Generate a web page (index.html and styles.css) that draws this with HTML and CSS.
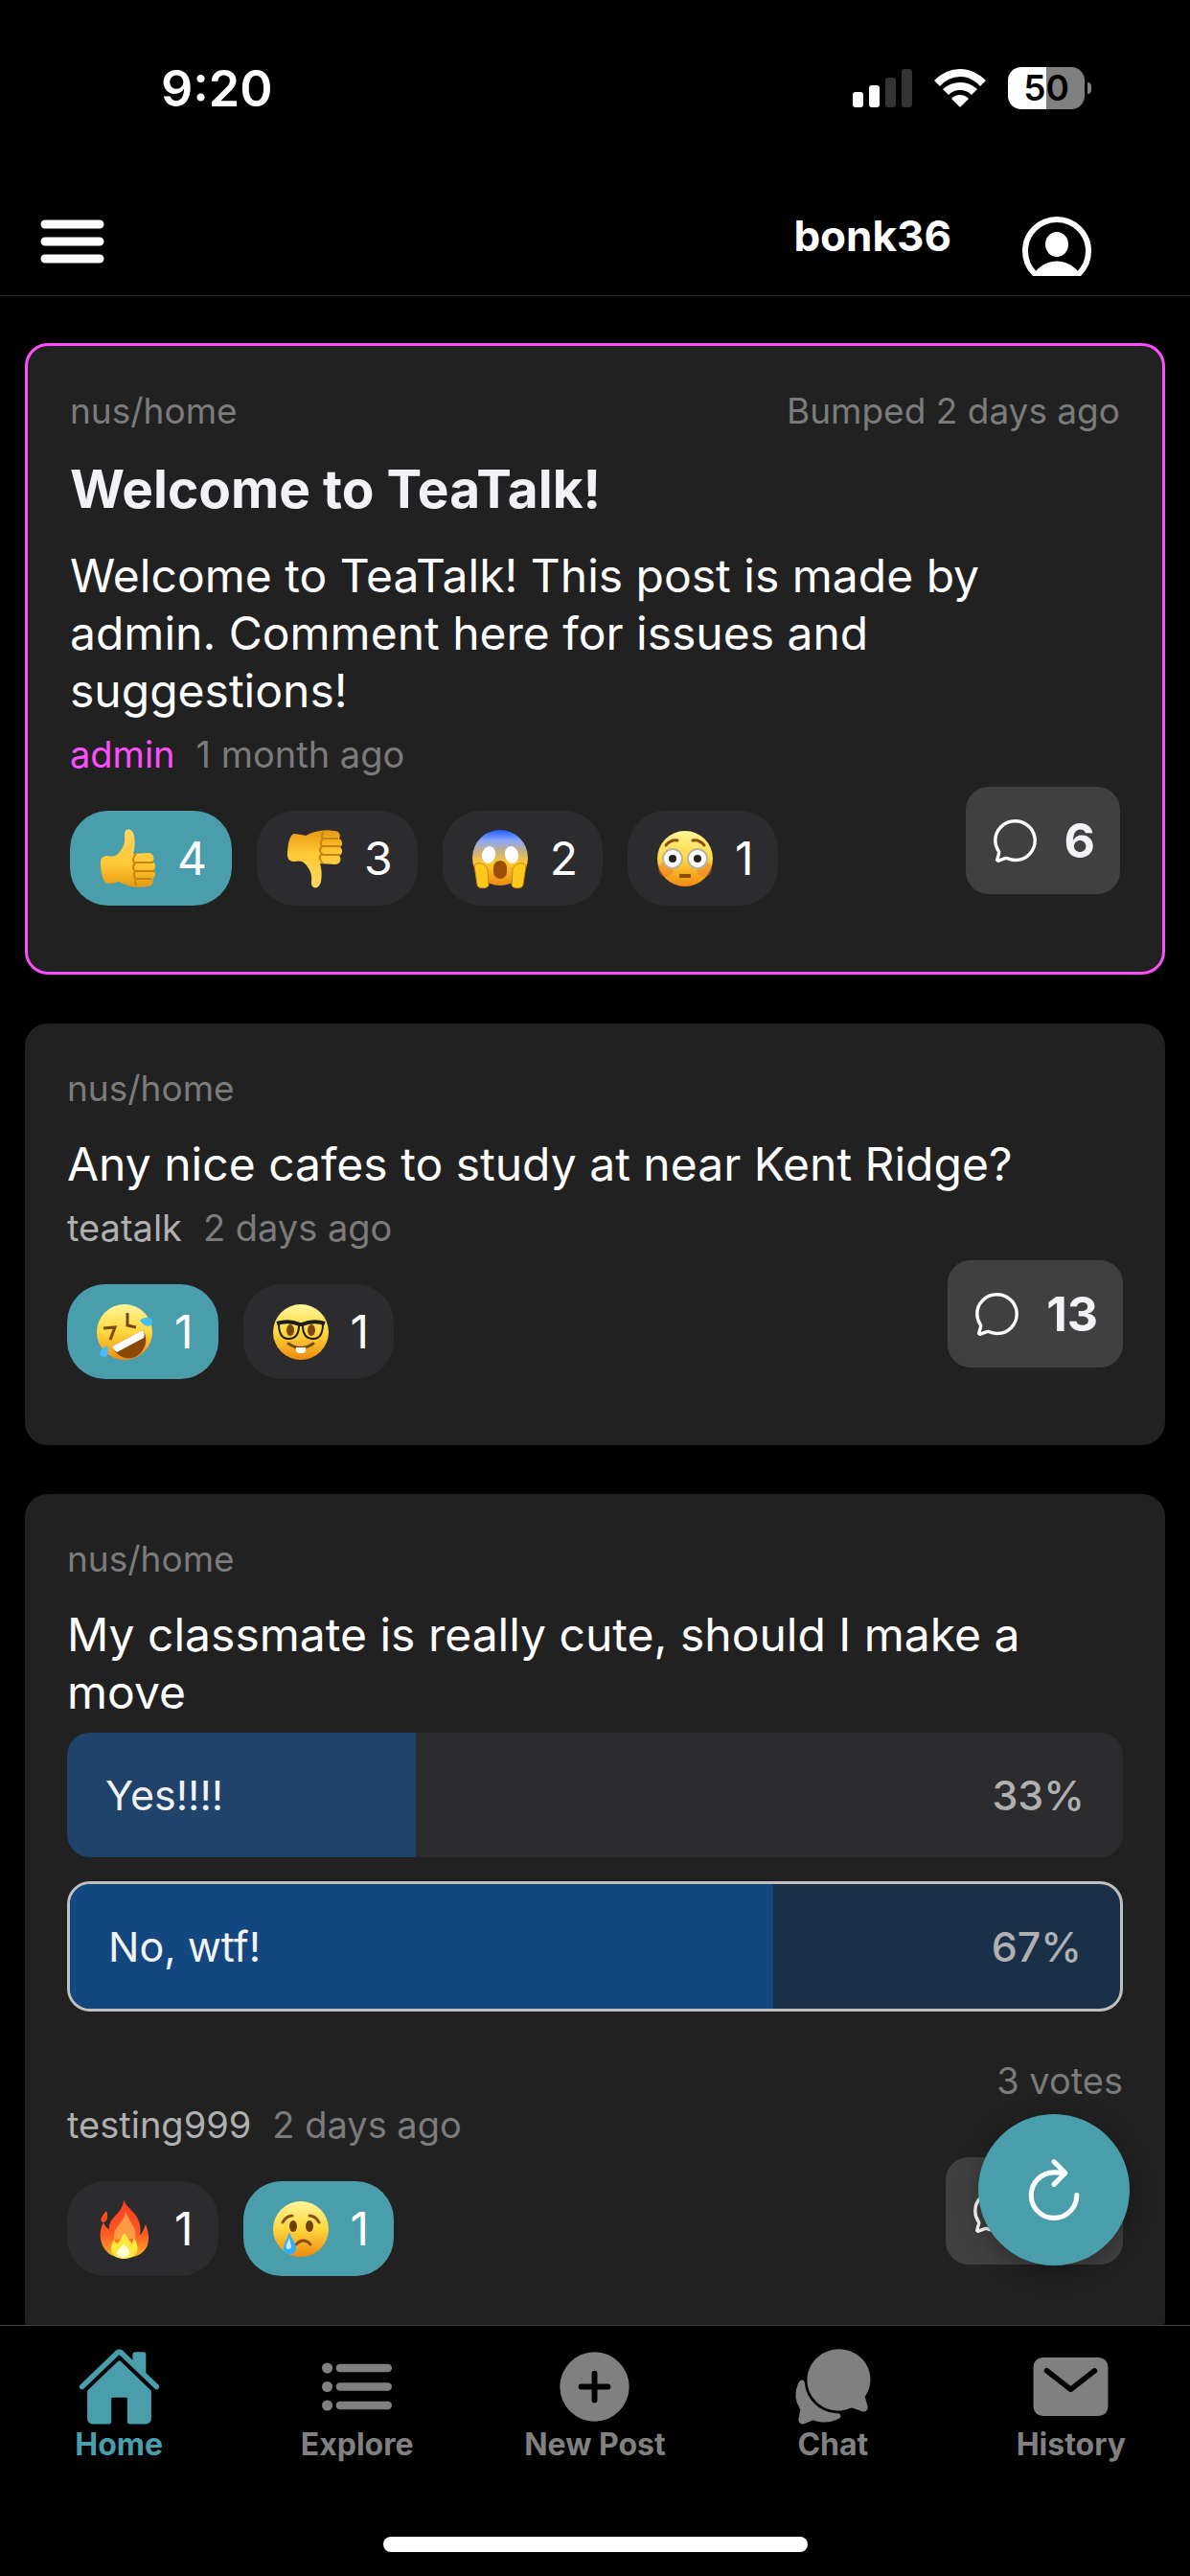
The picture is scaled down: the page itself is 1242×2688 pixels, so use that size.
FILE: index.html
```html
<!DOCTYPE html>
<html lang="en">
  <head>
    <meta charset="UTF-8" />
    <meta name="viewport" content="width=device-width, initial-scale=1.0" />
    <title>TeaTalk</title>
    <link rel="stylesheet" href="styles.css">
  </head>
  <body>
    <!-- Shared icons and emoji -->
    <svg class="sprites" width="0" height="0" aria-hidden="true">
      <defs>
        <linearGradient id="face" x1="0" y1="0" x2="0" y2="1">
          <stop offset="0" stop-color="#fff59a" />
          <stop offset="0.5" stop-color="#ffd83c" />
          <stop offset="1" stop-color="#ee8a10" />
        </linearGradient>
        <linearGradient id="scared" x1="0" y1="0" x2="0" y2="1">
          <stop offset="0" stop-color="#1f5cff" />
          <stop offset="0.2" stop-color="#8fa9f5" />
          <stop offset="0.4" stop-color="#c9b27c" />
          <stop offset="0.6" stop-color="#ffc832" />
          <stop offset="1" stop-color="#ee8a10" />
        </linearGradient>
        <linearGradient id="hand" x1="0" y1="0" x2="0" y2="1">
          <stop offset="0" stop-color="#ffd563" />
          <stop offset="0.6" stop-color="#ffc935" />
          <stop offset="1" stop-color="#e59a12" />
        </linearGradient>
        <linearGradient id="flame" x1="0" y1="0" x2="0" y2="1">
          <stop offset="0" stop-color="#ff3b1e" />
          <stop offset="0.6" stop-color="#ff5a22" />
          <stop offset="1" stop-color="#ffb52c" />
        </linearGradient>
        <symbol id="bubble" viewBox="0 0 512 512">
          <path d="M87.49 380c1.19-4.38-1.44-10.47-3.95-14.86a44.86 44.86 0 00-2.54-3.8 199.81 199.81 0 01-33-110C47.65 139.09 140.73 48 255.83 48 356.21 48 440 117.54 459.58 209.85a199 199 0 014.42 41.64c0 112.41-89.49 204.93-204.59 204.93-18.3 0-43-4.6-56.47-8.37s-26.92-8.77-30.39-10.11a31.09 31.09 0 00-11.12-2.07 30.71 30.71 0 00-12.09 2.43l-67.83 24.48a16 16 0 01-4.67 1.22 9.6 9.6 0 01-9.57-9.74 15.85 15.85 0 01.6-3.29z" fill="none" stroke="#fff" stroke-width="34" stroke-linecap="round" stroke-miterlimit="10" />
        </symbol>
        <symbol id="thumb" viewBox="0 0 64 64">
          <path d="M4 36c0-5 3-7 7-7 5 1 9 1 12-3 4-5 7-9 6-18-1-8 8-9 10 0 1 6 1 12-1 19l16-1c5 0 7 6 4 9 4 2 4 7 1 9 3 2 3 7-1 9 2 4 0 8-5 8-10 2-21 0-30-5-4 1-8 2-12 2-5-1-7-13-7-22z" fill="url(#hand)" />
          <path d="M39 36h20M40 45h20M40 53h17M41 27c-4 4-4 8-1 10-3 3-2 6 0 8-2 3-1 6 1 8-2 2-1 5 1 7" fill="none" stroke="#c98312" stroke-width="2" />
        </symbol>
        <symbol id="scream" viewBox="0 0 64 64">
          <circle cx="32" cy="31" r="29" fill="url(#scared)" />
          <ellipse cx="20" cy="28" rx="7" ry="9" transform="rotate(14 20 28)" fill="#fff" />
          <ellipse cx="44" cy="28" rx="7" ry="9" transform="rotate(-14 44 28)" fill="#fff" />
          <rect x="25" y="34" width="14" height="19" rx="7" fill="#9c5006" />
          <path d="M5 39c4-4 11-3 14 4l1 16c0 5-12 5-12 0z" fill="#ffc91c" stroke="#c98312" />
          <path d="M59 39c-4-4-11-3-14 4l-1 16c0 5 12 5 12 0z" fill="#ffc91c" stroke="#c98312" />
        </symbol>
        <symbol id="flushed" viewBox="0 0 64 64">
          <circle cx="32" cy="32" r="29" fill="url(#face)" />
          <circle cx="12" cy="43" r="8" fill="#f26a22" opacity="0.4" />
          <circle cx="52" cy="43" r="8" fill="#f26a22" opacity="0.4" />
          <path d="M12 18q5-6 12-5M52 18q-5-6-12-5" fill="none" stroke="#8a4d0a" stroke-width="3" stroke-linecap="round" />
          <circle cx="19" cy="32" r="10" fill="#fff" stroke="#b9b3a2" stroke-width="2" />
          <circle cx="45" cy="32" r="10" fill="#fff" stroke="#b9b3a2" stroke-width="2" />
          <circle cx="19" cy="32" r="4" fill="#222" />
          <circle cx="45" cy="32" r="4" fill="#222" />
          <rect x="26" y="48" width="12" height="4" rx="1" fill="#8a4d0a" />
        </symbol>
        <symbol id="rofl" viewBox="0 0 64 64">
          <circle cx="32" cy="32" r="29" fill="url(#face)" />
          <path d="M35 12v13l9 2M10 28l12-1-5 13" fill="none" stroke="#7a470a" stroke-width="3" />
          <path d="M19 47L51 30c7 10 2 23-8 28-9 4-20-1-24-11z" fill="#8a4806" />
          <path d="M19 47L51 30c2 3 2 6 1 8L24 53c-3-2-4-4-5-6z" fill="#fff" />
          <path d="M48 20c4-5 13-4 13 1 1 6-8 7-13-1zM14 46c2 6 1 13-4 12-7-1-3-9 4-12z" fill="#48bdf5" />
        </symbol>
        <symbol id="nerd" viewBox="0 0 64 64">
          <circle cx="32" cy="32" r="29" fill="url(#face)" />
          <ellipse cx="21" cy="30" rx="4" ry="6" fill="#7a470a" />
          <ellipse cx="43" cy="30" rx="4" ry="6" fill="#7a470a" />
          <path d="M7 23q12-4 24 1h2q12-5 24-1" fill="none" stroke="#1d1d1d" stroke-width="4" />
          <path d="M9 23c0 11 3 16 10 16s11-5 11-14M55 23c0 11-3 16-10 16s-11-5-11-14" fill="none" stroke="#1d1d1d" stroke-width="2" />
          <path d="M19 44q13 9 26 0" fill="none" stroke="#7a470a" stroke-width="3" stroke-linecap="round" />
          <path d="M27 48h10v4q-1 2-4 2h-2q-3 0-4-2z" fill="#fff" />
        </symbol>
        <symbol id="fire" viewBox="0 0 64 64">
          <path d="M31 1c2 7 8 10 13 17 5 8 5 14 4 20 3-2 4-6 6-11 5 12 4 23-3 29-9 8-29 8-37 0-9-9-9-22-4-31 2 4 3 6 6 7-1-13 15-16 15-31z" fill="url(#flame)" />
          <path d="M13 13c3 6 0 13-4 12-4-3 0-7 4-12z" fill="#ff4a20" />
          <path d="M33 13c-1 13-13 15-12 30l22-1c3-11-6-16-10-29z" fill="#ff9a45" />
          <path d="M32 36c4 5 5 9 8 11 1-2 1-4 2-6 9 16-1 22-11 22-11 0-17-9-10-20 1 2 2 4 4 4 3-3 3-7 7-11z" fill="#ffe93b" />
          <path d="M31 47c3 4 7 6 6 11-2 5-11 5-13 0-1-5 5-7 7-11z" fill="#fffbd0" />
        </symbol>
        <symbol id="cry" viewBox="0 0 64 64">
          <circle cx="32" cy="32" r="29" fill="url(#face)" />
          <path d="M13 25q4-7 10-7M51 25q-4-7-10-7M27 48q8-8 15 0" fill="none" stroke="#8a4d0a" stroke-width="3" stroke-linecap="round" />
          <ellipse cx="24" cy="29" rx="4" ry="6" fill="#6f3f08" />
          <ellipse cx="41" cy="29" rx="4" ry="6" fill="#6f3f08" />
          <path d="M20 35c2 7 7 12 7 17 0 8-13 8-13 0 0-5 4-10 6-17z" fill="#2fb0ff" />
          <path d="M20 41c-2 5-4 8-3 11 1 2 5 1 5-2z" fill="#c6ecff" />
        </symbol>
      </defs>
    </svg>

    <div class="status-bar">
      <span class="time">9:20</span>
      <div class="status-icons">
        <svg width="62" height="40" viewBox="0 0 62 40" aria-hidden="true">
          <rect x="0" y="24" width="11" height="16" rx="3" fill="#fff" />
          <rect x="17" y="17" width="11" height="23" rx="3" fill="#fff" />
          <rect x="34" y="9" width="11" height="31" rx="3" fill="#333" />
          <rect x="51" y="0" width="11" height="40" rx="3" fill="#333" />
        </svg>
        <svg width="54" height="40" viewBox="0 0 54 40" aria-hidden="true">
          <path d="M0 12Q12 0 27 0T54 12L48 18Q39 8 27 8T6 18z" fill="#fff" />
          <path d="M9 21Q17 14 27 14T45 21L39 27Q34 22 27 22T15 27z" fill="#fff" />
          <path d="M18 31Q22 27 27 27T36 31L28 39Q27 40 26 39z" fill="#fff" />
        </svg>
        <div class="battery">50</div>
      </div>
    </div>

    <header class="app-header">
      <button class="menu-button" aria-label="Open menu">
        <svg width="67" height="46" viewBox="0 0 67 46">
          <path d="M5 5h57M5 23h57M5 41h57" stroke="#fff" stroke-width="9" stroke-linecap="round" />
        </svg>
      </button>
      <a class="profile" href="#profile">
        <span>bonk36</span>
        <svg width="72" height="62" viewBox="0 0 72 62" aria-hidden="true">
          <circle cx="36" cy="36" r="33" fill="none" stroke="#fff" stroke-width="6" />
          <ellipse cx="36" cy="29" rx="12" ry="13" fill="#fff" />
          <path d="M14 57C26 43 46 43 58 57V62H12z" fill="#fff" />
        </svg>
      </a>
    </header>

    <main class="feed">
      <article class="post pinned">
        <div class="post-meta">
          <span>nus/home</span>
          <span>Bumped 2 days ago</span>
        </div>
        <h2>Welcome to TeaTalk!</h2>
        <p class="post-text">Welcome to TeaTalk! This post is made by admin. Comment here for issues and suggestions!</p>
        <div class="byline"><span class="author admin">admin</span><span>1 month ago</span></div>
        <div class="post-footer">
          <div class="reactions">
            <button class="reaction active"><svg aria-label="Thumbs up"><use href="#thumb" /></svg>4</button>
            <button class="reaction"><svg class="flip" aria-label="Thumbs down"><use href="#thumb" /></svg>3</button>
            <button class="reaction"><svg aria-label="Scream"><use href="#scream" /></svg>2</button>
            <button class="reaction"><svg aria-label="Flushed"><use href="#flushed" /></svg>1</button>
          </div>
          <button class="comments"><svg aria-label="Comments"><use href="#bubble" /></svg>6</button>
        </div>
      </article>

      <article class="post">
        <div class="post-meta"><span>nus/home</span></div>
        <p class="post-text">Any nice cafes to study at near Kent Ridge?</p>
        <div class="byline"><span class="author">teatalk</span><span>2 days ago</span></div>
        <div class="post-footer">
          <div class="reactions">
            <button class="reaction active"><svg aria-label="Rolling laugh"><use href="#rofl" /></svg>1</button>
            <button class="reaction"><svg aria-label="Nerd"><use href="#nerd" /></svg>1</button>
          </div>
          <button class="comments"><svg aria-label="Comments"><use href="#bubble" /></svg>13</button>
        </div>
      </article>

      <article class="post">
        <div class="post-meta"><span>nus/home</span></div>
        <p class="post-text">My classmate is really cute, should I make a move</p>
        <div class="poll">
          <button class="option">
            <span class="fill" style="width: 33%"></span>
            <span class="label">Yes!!!!</span>
            <span class="percent">33%</span>
          </button>
          <button class="option chosen">
            <span class="fill" style="width: 67%"></span>
            <span class="label">No, wtf!</span>
            <span class="percent">67%</span>
          </button>
        </div>
        <p class="votes">3 votes</p>
        <div class="byline"><span class="author">testing999</span><span>2 days ago</span></div>
        <div class="post-footer">
          <div class="reactions">
            <button class="reaction"><svg aria-label="Fire"><use href="#fire" /></svg>1</button>
            <button class="reaction active"><svg aria-label="Crying"><use href="#cry" /></svg>1</button>
          </div>
          <button class="comments" aria-label="Comments"><svg><use href="#bubble" /></svg><span class="count-space"></span></button>
        </div>
      </article>
    </main>

    <nav class="tab-bar">
      <button class="refresh" aria-label="Refresh">
        <svg width="76" height="76" viewBox="0 0 512 512" fill="none" stroke="#fff" stroke-width="34" stroke-linecap="round">
          <path d="M320 146s24.36-12-64-12a160 160 0 10160 160" />
          <path d="M256 58l80 80-80 80" stroke-linejoin="round" />
        </svg>
      </button>
      <div class="tabs">
        <a class="tab current" href="#home">
          <svg viewBox="0 0 512 512" aria-hidden="true">
            <path d="M261.56 101.28a8 8 0 00-11.06 0L66.4 277.15a8 8 0 00-2.47 5.79L63.9 448a32 32 0 0032 32H192a16 16 0 0016-16V328a8 8 0 018-8h80a8 8 0 018 8v136a16 16 0 0016 16h96.06a32 32 0 0032-32V282.94a8 8 0 00-2.47-5.79z" />
            <path d="M490.91 244.15l-74.8-71.56V64a16 16 0 00-16-16h-48a16 16 0 00-16 16v32l-57.92-55.38C272.77 35.14 264.71 32 256 32c-8.68 0-16.72 3.14-22.14 8.63L21.16 244.13c-6.22 6-7 15.87-1.34 22.37A16 16 0 0043 267.56L250.5 69.28a8.06 8.06 0 0111.06 0l207.52 198.28a16 16 0 0022.59-.44c6.14-6.36 5.63-16.86-.76-22.97z" />
          </svg>
          Home
        </a>
        <a class="tab" href="#explore">
          <svg viewBox="0 0 512 512" aria-hidden="true">
            <path d="M154 144h288M154 256h288M154 368h288" fill="none" stroke="currentColor" stroke-width="48" stroke-linecap="round" />
            <circle cx="78" cy="144" r="32" />
            <circle cx="78" cy="256" r="32" />
            <circle cx="78" cy="368" r="32" />
          </svg>
          Explore
        </a>
        <a class="tab" href="#new-post">
          <svg viewBox="0 0 512 512" aria-hidden="true">
            <circle cx="256" cy="256" r="208" />
            <path d="M176 256h160M256 176v160" fill="none" stroke="#000" stroke-width="34" stroke-linecap="round" />
          </svg>
          New Post
        </a>
        <a class="tab" href="#chat">
          <svg viewBox="0 0 512 512" aria-hidden="true">
            <path d="M439.9 405.6a26.77 26.77 0 01-9.59-2l-56.78-20.13-.42-.17a9.88 9.88 0 00-3.91-.76 10.32 10.32 0 00-3.62.66c-1.38.52-13.81 5.19-26.85 8.77-7.07 1.94-31.68 8.27-51.43 8.27-50.48 0-97.68-19.4-132.89-54.63A183.38 183.38 0 01100.3 215.1a175.9 175.9 0 014.06-37.58c8.79-40.62 32.07-77.57 65.55-104A194.76 194.76 0 01290.3 30c52.21 0 100.86 20 137 56.18 34.16 34.27 52.88 79.33 52.73 126.87a177.86 177.86 0 01-30.3 99.15l-.19.28-.74 1c-.17.23-.34.45-.5.68l-.15.27a21.63 21.63 0 00-1.08 2.09l15.74 55.94a26.42 26.42 0 011.12 7.11 24 24 0 01-24.03 26.03z" />
            <path d="M299.87 425.39a15.74 15.74 0 00-10.29-8.1c-5.78-1.53-12.52-1.27-17.67-1.65a201.78 201.78 0 01-128.82-58.75A199.21 199.21 0 0186.4 244.16C85 234.42 85 232 85 232a16 16 0 00-28-10.58s-7.88 8.58-11.6 17.19a162.09 162.09 0 0011 150.06C59 393 59 395 58.42 399.5c-2.73 14.11-7.51 39-10 51.91a24 24 0 008 22.92l.46.39A24.34 24.34 0 0072 480a23.42 23.42 0 009-1.79l53.51-20.65a8.05 8.05 0 015.72 0c21.07 7.84 43 12 63.78 12a176 176 0 0074.91-16.66c5.46-2.56 14-5.34 19-11.12a15 15 0 001.95-16.39z" />
          </svg>
          Chat
        </a>
        <a class="tab" href="#history">
          <svg viewBox="0 0 512 512" aria-hidden="true">
            <path d="M424 80H88a56.06 56.06 0 00-56 56v240a56.06 56.06 0 0056 56h336a56.06 56.06 0 0056-56V136a56.06 56.06 0 00-56-56zm-14.18 92.63l-144 112a16 16 0 01-19.64 0l-144-112a16 16 0 1119.64-25.26L256 251.73l134.18-104.36a16 16 0 0119.64 25.26z" />
          </svg>
          History
        </a>
      </div>
      <div class="home-indicator"></div>
    </nav>
  </body>
</html>
```
FILE: styles.css
```css
* {
  box-sizing: border-box;
}
body {
  display: flex;
  flex-direction: column;
  height: 100vh;
  margin: 0;
  background-color: #000;
  color: #f2f2f7;
  font-family: Inter, "Liberation Sans", sans-serif;
}
h2,
p {
  margin: 0;
}
button {
  border: none;
  padding: 0;
  color: inherit;
  font-family: inherit;
  cursor: pointer;
}
a {
  color: inherit;
  text-decoration: none;
}
svg {
  display: block;
  flex: none;
}
.sprites {
  position: absolute;
}

/* Status bar */
.status-bar {
  display: flex;
  flex: none;
  justify-content: space-between;
  align-items: center;
  height: 184px;
  padding: 0 110px 0 168px;
}
.time {
  color: #fff;
  font-size: 52px;
  font-weight: 600;
}
.status-icons {
  display: flex;
  align-items: center;
  gap: 23px;
}
.battery {
  position: relative;
  width: 80px;
  height: 44px;
  border-radius: 14px;
  background: linear-gradient(to right, #fff 50%, #808080 50%);
  color: #000;
  font-size: 37px;
  font-weight: 600;
  line-height: 44px;
  text-align: center;
}
.battery::after {
  content: "";
  position: absolute;
  top: 16px;
  right: -7px;
  width: 4px;
  height: 12px;
  border-radius: 0 6px 6px 0;
  background-color: #808080;
}

/* Header */
.app-header {
  display: flex;
  flex: none;
  justify-content: space-between;
  align-items: flex-start;
  height: 125px;
  padding: 42px 103px 0 42px;
  border-bottom: 1px solid #272727;
}
.menu-button {
  padding: 3px 0;
  background: none;
}
.profile {
  display: flex;
  gap: 74px;
  color: #fff;
  font-size: 44px;
  font-weight: 700;
  line-height: 40px;
}

/* Feed */
.feed {
  display: flex;
  flex: 1;
  flex-direction: column;
  gap: 51px;
  min-height: 0;
  padding: 49px 26px;
  overflow-y: auto;
  scrollbar-width: none;
}
.post {
  flex: none;
  padding: 44px;
  border-radius: 24px;
  background-color: #212121;
}
.pinned {
  border: 3px solid #ff4dff;
}
.post-meta {
  display: flex;
  justify-content: space-between;
  margin-bottom: 25px;
  color: #7b7b7b;
  font-size: 37px;
  line-height: 48px;
}
.post h2 {
  margin-bottom: 29px;
  font-size: 55px;
  font-weight: 700;
  line-height: 64px;
}
.post-text {
  color: #fff;
  font-size: 48px;
  line-height: 60px;
}
.byline {
  display: flex;
  gap: 22px;
  color: #7b7b7b;
  font-size: 38px;
  line-height: 48px;
}
.post-text + .byline {
  margin-top: 12px;
}
.author {
  color: #b0b0b0;
}
.admin {
  color: #ff4dff;
}
.post-footer {
  display: flex;
  justify-content: space-between;
  align-items: flex-start;
  margin-top: 10px;
}
.reactions {
  display: flex;
  gap: 26px;
  padding: 25px 0;
}
.reaction {
  display: flex;
  align-items: center;
  gap: 20px;
  height: 99px;
  padding: 0 26px 0 28px;
  border-radius: 40px;
  background-color: #2c2c2e;
  color: #fff;
  font-size: 48px;
}
.reaction svg {
  width: 64px;
  height: 64px;
}
.reaction .flip {
  transform: scaleY(-1);
}
.active {
  background-color: #4a9eac;
}
.comments {
  display: flex;
  align-items: center;
  gap: 26px;
  height: 112px;
  padding: 0 26px;
  border-radius: 24px;
  background-color: #404040;
  font-size: 50px;
  font-weight: 700;
}
.comments svg {
  width: 51px;
  height: 51px;
}
.count-space {
  width: 56px;
}

/* Poll */
.poll {
  display: flex;
  flex-direction: column;
  gap: 25px;
  margin-top: 12px;
}
.option {
  position: relative;
  display: flex;
  justify-content: space-between;
  align-items: center;
  padding: 38px 40px;
  border-radius: 24px;
  background-color: #2c2c2e;
  font-size: 43px;
  line-height: 54px;
  overflow: hidden;
}
.fill {
  position: absolute;
  top: 0;
  bottom: 0;
  left: 0;
  background-color: #1f436b;
}
.label,
.percent {
  position: relative;
}
.percent {
  color: #b0b0b0;
  font-weight: 500;
}
.chosen {
  border: 3px solid #bfbfbf;
  background-color: #1a3048;
}
.chosen .fill {
  background-color: #12477f;
}
.votes {
  margin-top: 50px;
  color: #7b7b7b;
  font-size: 38px;
  line-height: 44px;
  text-align: right;
}

/* Bottom tabs */
.tab-bar {
  position: relative;
  flex: none;
  padding: 19px 0 25px;
  border-top: 1px solid #424242;
  background-color: #000;
}
.tabs {
  display: grid;
  grid-template-columns: repeat(5, 1fr);
}
.tab {
  display: flex;
  flex-direction: column;
  align-items: center;
  color: #808080;
  font-size: 32px;
  font-weight: 700;
  line-height: 32px;
}
.tab svg {
  width: 89px;
  height: 89px;
  fill: currentColor;
}
.current {
  color: #4a9eac;
}
.home-indicator {
  width: 443px;
  height: 16px;
  margin: 80px auto 0;
  border-radius: 8px;
  background-color: #fff;
}

/* Floating refresh button */
.refresh {
  position: absolute;
  right: 63px;
  bottom: 100%;
  display: flex;
  justify-content: center;
  align-items: center;
  width: 158px;
  height: 158px;
  margin-bottom: 63px;
  border-radius: 50%;
  background-color: #4a9eac;
  box-shadow: 0 6px 24px rgba(0, 0, 0, 0.3);
}
```
